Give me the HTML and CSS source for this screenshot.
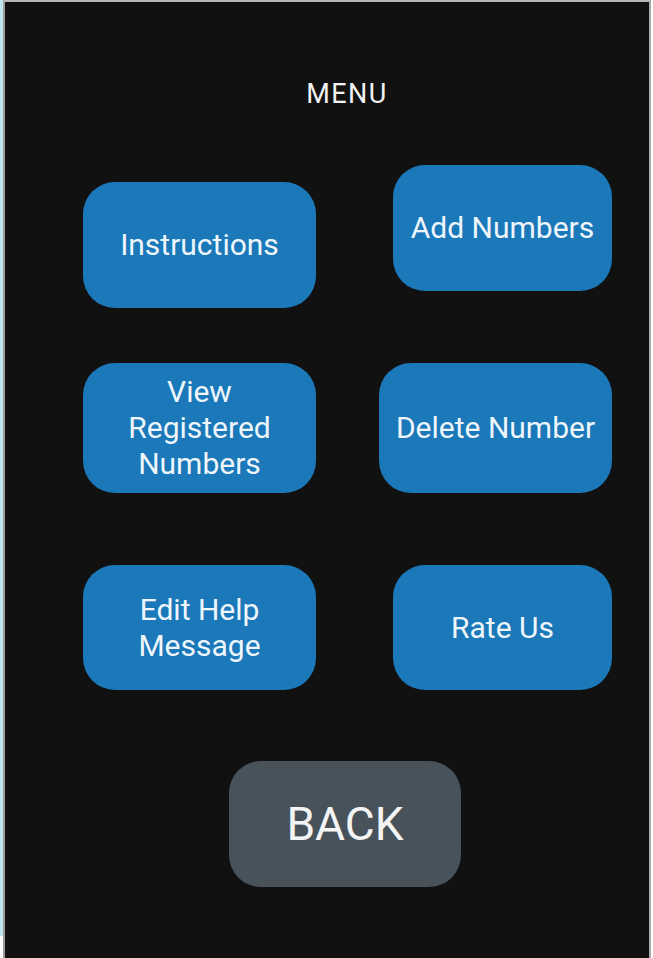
FILE: index.html
```html
<!DOCTYPE html>
<html>
<head>
<meta charset="utf-8">
<link rel="stylesheet" href="styles.css">
</head>
<body>
<div class="edge"></div>
<div class="screen">
  <div class="title">MENU</div>
  <div class="rows">
    <div class="row row1">
      <div class="btn left instr">Instructions</div>
      <div class="btn right narrow">Add Numbers</div>
    </div>
    <div class="row row2">
      <div class="btn left tall">View<br>Registered<br>Numbers</div>
      <div class="btn right tall">Delete Number</div>
    </div>
    <div class="row row3">
      <div class="btn left short">Edit Help<br>Message</div>
      <div class="btn right narrow short">Rate Us</div>
    </div>
  </div>
  <div class="btn back">BACK</div>
</div>
</body>
</html>
```

FILE: styles.css
```css
html, body {
  margin: 0;
  padding: 0;
  background: #ffffff;
}
body {
  display: flex;
  width: 653px;
  height: 958px;
  overflow: hidden;
  font-family: Roboto, "Liberation Sans", sans-serif;
}
.edge {
  width: 3px;
  height: 936px;
  background: #bfe3f0;
  flex: none;
}
.screen {
  width: 644px;
  height: 956px;
  background: #111111;
  border-left: 2px solid #9c9c9c;
  border-top: 2px solid #b5b5b5;
  border-right: 2px solid #a8a8a8;
  flex: none;
}
.title {
  margin-top: 77px;
  height: 30px;
  line-height: 30px;
  font-size: 27px;
  letter-spacing: 1.5px;
  color: #f2f2f2;
  text-align: center;
  padding-left: 40px;
}
.rows {
  margin-left: 78px;
  width: 529px;
}
.row {
  display: flex;
  justify-content: space-between;
  align-items: flex-start;
}
.row1 { margin-top: 56px; }
.row2 { margin-top: 55px; }
.row3 { margin-top: 72px; }
.btn {
  display: flex;
  align-items: center;
  justify-content: center;
  text-align: center;
  box-sizing: border-box;
  width: 233px;
  height: 126px;
  border-radius: 32px;
  background: #1b78b9;
  color: #eef6fb;
  font-size: 30px;
  line-height: 36px;
}
.narrow { width: 219px; }
.instr { margin-top: 17px; }
.tall { height: 130px; }
.short { height: 125px; }
.back {
  margin-top: 71px;
  margin-left: 224px;
  width: 232px;
  height: 126px;
  background: #47525b;
  color: #f4f4f4;
  font-size: 46px;
  line-height: 50px;
}
```
